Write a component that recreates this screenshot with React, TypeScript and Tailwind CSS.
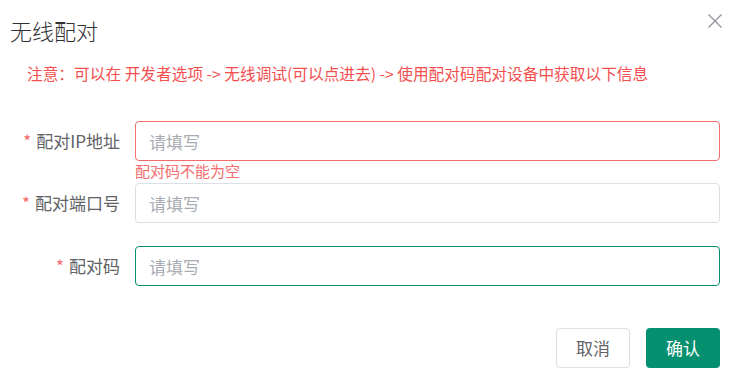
const font = { fontFamily: '"Noto Sans CJK SC", "Noto Sans", sans-serif' };

function Field({
  label,
  border,
  error,
}: {
  label: string;
  border: string;
  error?: string;
}) {
  return (
    <div className={error ? "" : "mb-[23px]"}>
      <div className="flex items-center">
        <label className="flex w-[135px] shrink-0 items-center justify-end pr-[15px] text-[17px] leading-[40px] text-[#606266]">
          <span className="mr-[5px] text-[#f56c6c]">*</span>
          {label}
        </label>
        <input
          placeholder="请填写"
          className={`h-[40px] flex-1 rounded-[4px] border bg-white px-[13px] text-[17px] text-[#606266] outline-none placeholder:text-[#a8abb2] ${border}`}
        />
      </div>
      {error && (
        <div className="h-[22px] pl-[135px] pt-[1px] text-[15px] leading-[18px] text-[#f56c6c]">
          {error}
        </div>
      )}
    </div>
  );
}

export default function App() {
  return (
    <div className="flex h-[387px] w-[736px] flex-col bg-white pr-[16px]" style={font}>
      <header className="flex items-start justify-between pl-[10px] pt-[16px]">
        <h1 className="text-[22px] font-light leading-[28px] text-[#303133]">无线配对</h1>
        <button className="-mr-[3px] mt-[-3px] text-[#909399]">
          <svg width="16" height="16" viewBox="0 0 16 16" fill="none" stroke="currentColor" strokeWidth="1.3">
            <path d="M1.5 1.5l13 13M14.5 1.5l-13 13" />
          </svg>
        </button>
      </header>

      <p className="mt-[19px] pl-[27px] text-[15.7px] leading-[22px] text-[#f34f4f]">
        注意：可以在 开发者选项 -&gt; 无线调试(可以点进去) -&gt; 使用配对码配对设备中获取以下信息
      </p>

      <form className="mt-[36px]">
        <Field label="配对IP地址" border="border-[#f56c6c]" error="配对码不能为空" />
        <Field label="配对端口号" border="border-[#dcdfe6]" />
        <Field label="配对码" border="border-[#07906f]" />
      </form>

      <footer className="mt-[19px] flex justify-end gap-[16px]">
        <button className="h-[40px] w-[74px] rounded-[4px] border border-[#dcdfe6] bg-white text-[17px] text-[#606266]">
          取消
        </button>
        <button className="h-[40px] w-[74px] rounded-[4px] bg-[#05906f] text-[17px] text-white">
          确认
        </button>
      </footer>
    </div>
  );
}
